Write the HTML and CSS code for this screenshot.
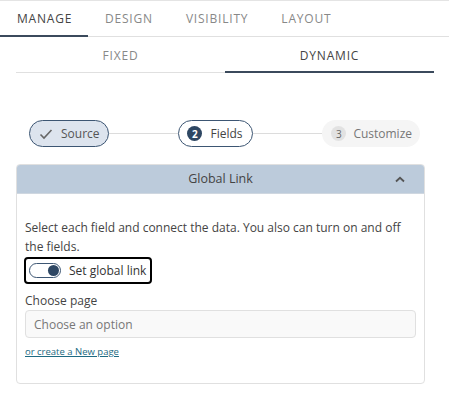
FILE: index.html
```html
<!DOCTYPE html>
<html>
<head>
<meta charset="utf-8">
<link rel="stylesheet" href="styles.css">
</head>
<body>
<div class="page">
  <nav class="tabs">
    <div class="tab active">MANAGE</div>
    <div class="tab">DESIGN</div>
    <div class="tab">VISIBILITY</div>
    <div class="tab">LAYOUT</div>
  </nav>
  <div class="subtabs">
    <div class="subtab">FIXED</div>
    <div class="subtab active">DYNAMIC</div>
  </div>
  <div class="stepper">
    <div class="step done">
      <svg class="check" width="14" height="12" viewBox="0 0 14 12"><path d="M1.5 6.5 L5 10 L12.5 2" fill="none" stroke="#666" stroke-width="1.6"/></svg>
      <span>Source</span>
    </div>
    <div class="line"></div>
    <div class="step current"><span class="num">2</span><span>Fields</span></div>
    <div class="line"></div>
    <div class="step todo"><span class="num">3</span><span>Customize</span></div>
  </div>
  <section class="panel">
    <header class="panel-head">
      <span>Global Link</span>
      <svg class="chev" width="10" height="7" viewBox="0 0 10 7"><path d="M1 5.5 L5 1.8 L9 5.5" fill="none" stroke="#555" stroke-width="1.8"/></svg>
    </header>
    <div class="panel-body">
      <p class="desc">Select each field and connect the data. You also can turn on and off the fields.</p>
      <div class="toggle-row">
        <span class="switch"><span class="knob"></span></span>
        <span class="toggle-label">Set global link</span>
      </div>
      <label class="field-label">Choose page</label>
      <div class="select">Choose an option</div>
      <a class="link" href="#">or create a New page</a>
    </div>
  </section>
</div>
</body>
</html>
```
FILE: styles.css
```css
* { box-sizing: border-box; }
html, body { margin: 0; padding: 0; background: #fff; }
body { font-family: "Open Sans", "Noto Sans", sans-serif; color: #444; }
.page { width: 449px; height: 394px; border-top: 1px solid #e4e4e4; }

.tabs { display: flex; border-bottom: 1px solid #e0e0e0; height: 36px; }
.tab { font-size: 12px; letter-spacing: 0.8px; color: #888; padding: 9px 16px 0 17px; height: 35px; white-space: nowrap; }
.tab.active { color: #444; border-bottom: 2px solid #3b4a5c; height: 36px; margin-bottom: -1px; width: 88px; }

.subtabs { display: flex; margin: 0 15px 0 16px; border-bottom: 1px solid #e0e0e0; height: 36px; }
.subtab { flex: 1; text-align: center; font-size: 12px; letter-spacing: 0.8px; color: #888; padding-top: 10px; }
.subtab.active { color: #444; border-bottom: 2px solid #3b4a5c; margin-bottom: -1px; }

.stepper { display: flex; align-items: center; margin: 47px 29px 0 29px; height: 27px; }
.line { flex: 1; height: 1px; background: #dcdcdc; }
.step { display: flex; align-items: center; height: 27px; border-radius: 14px; font-size: 12px; white-space: nowrap; flex-shrink: 0; }
.step.done { background: #dde4ee; border: 1px solid #3d5673; color: #555; padding: 0 8px 0 9px; gap: 8px; }
.step.current { border: 1px solid #3d5673; color: #444; padding: 0 9px 0 8px; gap: 8px; }
.step.todo { background: #f5f5f5; color: #777; padding: 0 8px 0 9px; gap: 7px; }
.num { display: inline-flex; align-items: center; justify-content: center; width: 15px; height: 15px; border-radius: 50%; font-size: 10px; font-weight: 700; }
.current .num { background: #2e4763; color: #fff; }
.todo .num { background: #e2e2e2; color: #666; font-weight: 400; }
.check { display: block; flex-shrink: 0; }

.panel { margin: 17px 24px 0 16px; border: 1px solid #e0e0e0; border-radius: 4px; height: 220px; overflow: hidden; }
.panel-head { position: relative; background: #bccbdb; height: 30px; display: flex; align-items: center; justify-content: center; font-size: 12.5px; color: #444; border-bottom: 1px solid #cfd7e0; margin: -1px -1px 0 -1px; border-radius: 4px 4px 0 0; }
.chev { position: absolute; right: 20px; top: 12px; }
.panel-body { padding: 24px 8px 0 8px; }
.desc { margin: 0; font-size: 12px; line-height: 19px; color: #444; }
.toggle-row { display: inline-flex; align-items: center; gap: 8px; border: 2px solid #000; border-radius: 4px; height: 27px; padding: 0 4px 0 3px; margin: 1px 0 0 -1px; white-space: nowrap; }
.switch { position: relative; width: 32px; height: 15px; border: 1px solid #3d5673; border-radius: 8px; flex-shrink: 0; }
.knob { position: absolute; right: 1px; top: 1px; width: 11px; height: 11px; border-radius: 50%; background: #2e4763; }
.toggle-label { font-size: 12px; color: #333; }
.field-label { display: block; font-size: 12px; color: #444; margin-top: 8px; line-height: 17px; }
.select { margin-top: 1px; height: 28px; background: #f9f9f9; border: 1px solid #e0e0e0; border-radius: 4px; font-size: 12px; color: #777; padding: 5px 8px 0 8px; }
.link { display: inline-block; margin-top: 6px; font-size: 9.5px; color: #1d6a82; text-decoration: underline; }
```
